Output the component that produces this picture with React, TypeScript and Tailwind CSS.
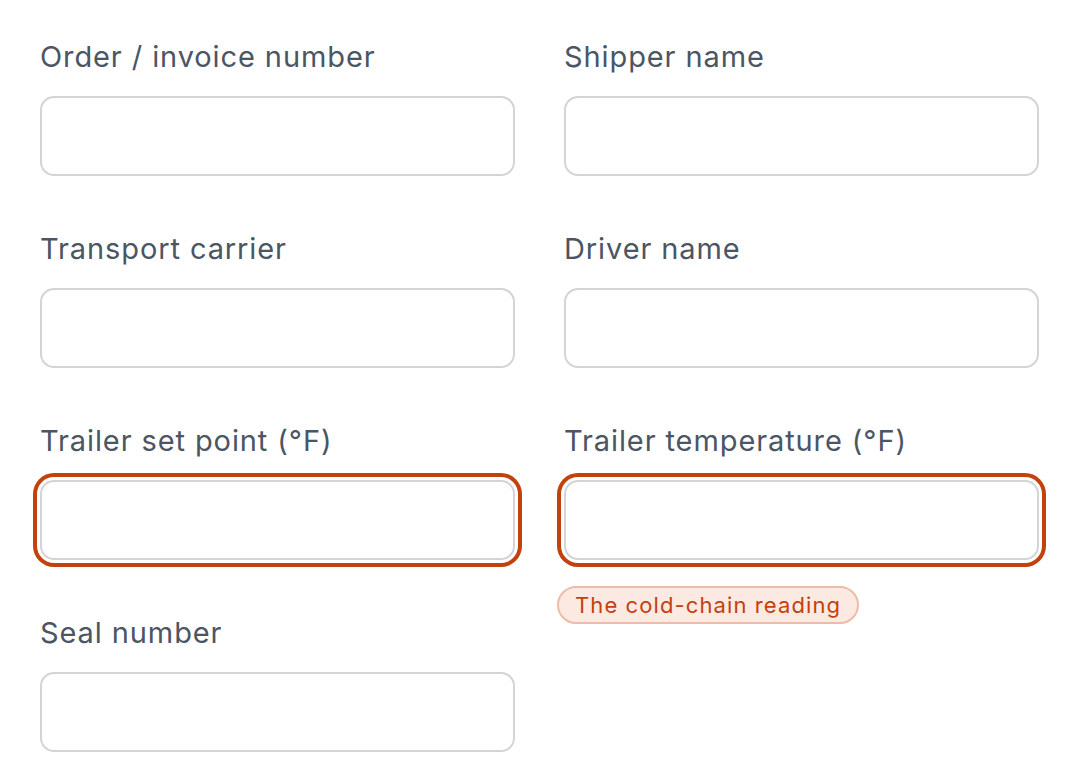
import React from "react";

type Field = {
  label: string;
  flagged?: boolean;
  note?: string;
};

const fields: Field[] = [
  { label: "Order / invoice number" },
  { label: "Shipper name" },
  { label: "Transport carrier" },
  { label: "Driver name" },
  { label: "Trailer set point (°F)", flagged: true },
  { label: "Trailer temperature (°F)", flagged: true, note: "The cold-chain reading" },
  { label: "Seal number" },
];

function FormField({ label, flagged, note }: Field) {
  return (
    <div className="flex flex-col">
      <label className="text-[29px] leading-[36px] text-[#4b5563] mb-[21px] tracking-[0.9px]">
        {label}
      </label>
      <div className="relative">
        <input
          type="text"
          className={
            "block w-full h-[80px] rounded-[14px] border-2 border-[#d4d4d8] bg-white outline-none " +
            (flagged ? "shadow-[0_0_0_3px_#ffffff,0_0_0_7px_#c2410c]" : "")
          }
        />
        {note && (
          <span className="absolute left-[-7px] top-[106px] inline-flex items-center h-[38px] px-[16px] rounded-full border-2 border-[#ecbca8] bg-[#fce9e2] text-[22px] leading-none tracking-[1.1px] text-[#c2410c] whitespace-nowrap">
            {note}
          </span>
        )}
      </div>
    </div>
  );
}

export default function App() {
  return (
    <div
      className="min-h-[784px] w-[1082px] bg-white pt-[39px] pl-[40px] pr-[43px]"
      style={{ fontFamily: "Inter, 'Noto Sans', sans-serif" }}
    >
      <div className="grid grid-cols-2 gap-x-[49px] gap-y-[55px]">
        {fields.map((f) => (
          <FormField key={f.label} {...f} />
        ))}
      </div>
    </div>
  );
}
